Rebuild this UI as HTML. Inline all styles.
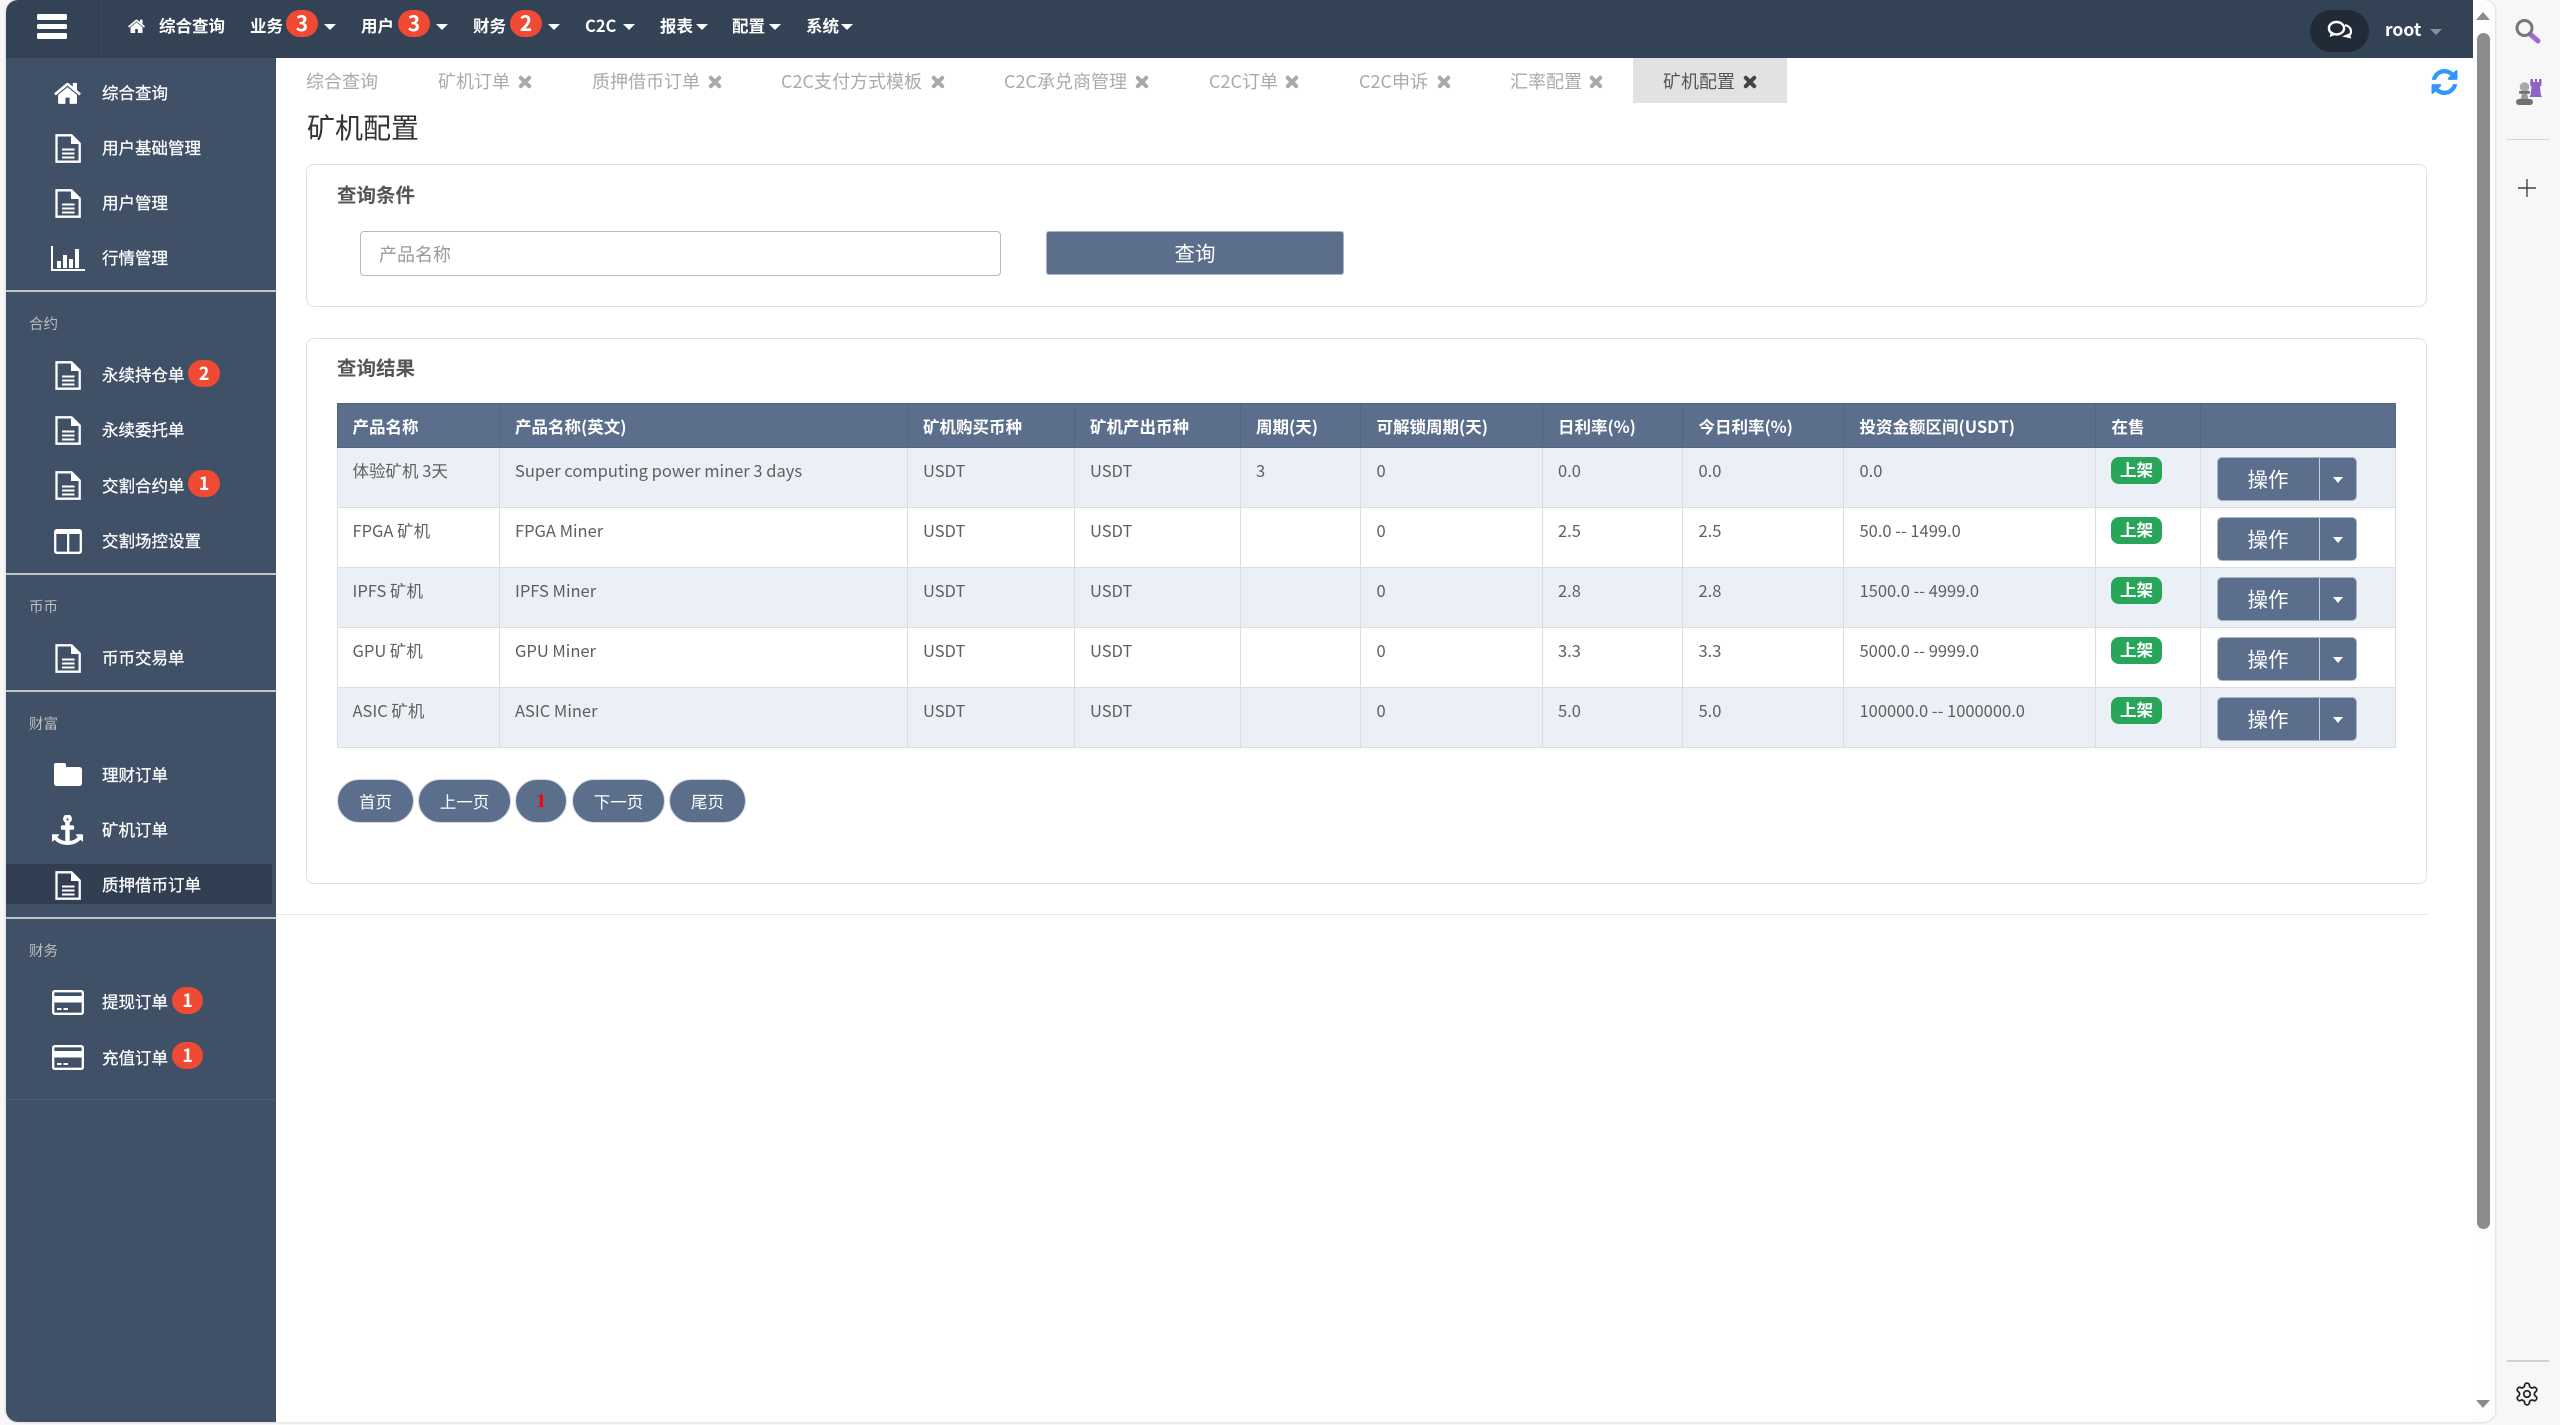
<!DOCTYPE html>
<html lang="zh-CN">
<head>
<meta charset="utf-8">
<title>矿机配置</title>
<style>
html,body{margin:0;padding:0;width:2560px;height:1425px;overflow:hidden;background:#f7f7f7;}
*{box-sizing:border-box;}
body{font-family:"Liberation Sans","Noto Sans CJK SC",sans-serif;}
.cj,.t,table,.btn,.pg{font-family:"Noto Sans CJK SC","Liberation Sans",sans-serif;}
.abs,.t,.car,.bdg,svg.i{position:absolute;}
.t{white-space:nowrap;line-height:26px;font-size:16.5px;}
#shadow{position:absolute;left:6px;top:0;width:2489px;height:1422px;border-radius:12px;box-shadow:0 0 0 1.5px #e6e6e6;}
#app{position:absolute;left:0;top:0;width:2495px;height:1422px;clip-path:inset(0 0 0 6px round 12px);background:#fff;overflow:hidden;}
.car{width:0;height:0;border-left:6px solid transparent;border-right:6px solid transparent;border-top:6.5px solid #fff;}
.nv{color:#fff;font-weight:700;}
.bdg{background:#f04934;color:#fff;font-weight:700;font-size:18px;text-align:center;border-radius:14px;line-height:27px;font-family:"Noto Sans CJK SC",sans-serif;}
.bdg.big{font-size:21px;}
.sd{color:#fff;font-weight:400;left:102px;-webkit-text-stroke:.25px #fff;}
.lb{color:#bdbdbd;font-size:14.5px;left:29px;}
.hr{position:absolute;left:6px;width:270px;height:2px;background:#c4c4c4;}
.tab{color:#aaa;font-size:18px;}
svg.x{color:#aaa;top:75px;}
.card{position:absolute;border:1px solid #e0e0e0;border-radius:8px;background:#fff;}
.h{color:#555;font-weight:700;font-size:19.5px;}
table{position:absolute;left:337px;top:403px;width:2058px;border-collapse:collapse;table-layout:fixed;font-size:16.5px;color:#5f5f5f;}
th{height:44px;background:#5b6f8c;color:#fff;text-align:left;padding:0 0 0 15.500px;font-weight:700;border:1px solid #526480;line-height:24px;}
td{height:60px;vertical-align:top;padding:10px 0 0 15.500px;border:1px solid #ddd;line-height:24px;position:relative;}
th:first-child,td:first-child{padding-left:14.500px;}
tr.o td{background:#ebeff6;}
.on{position:absolute;left:15px;top:9px;width:51px;height:27px;background:#27a65a;border-radius:8px;color:#fff;font-weight:700;font-size:16.5px;line-height:25px;text-align:center;}
.bg{position:absolute;left:15.500px;top:9px;width:140px;height:44px;background:#5b6f8c;border:1px solid #a8b2c2;border-radius:5px;}
.bg b{position:absolute;left:0;top:0;width:102px;height:42px;color:#fff;font-weight:400;font-size:20.5px;line-height:40px;text-align:center;border-right:1px solid #c8d0da;}
.bg i{position:absolute;left:115px;top:19px;width:0;height:0;border-left:5.500px solid transparent;border-right:5.500px solid transparent;border-top:6px solid #fff;}
.pg{position:absolute;top:779px;height:44px;background:#5b6f8c;border:1px solid #d5d9e0;border-radius:22px;color:#fff;font-size:16.5px;line-height:42px;text-align:center;}
</style>
</head>
<body>
<svg width="0" height="0" style="position:absolute">
<defs>
<symbol id="doc" viewBox="0 0 26 29">
<path d="M1.500 1.300H16.500L24.700 9.500V27.700H1.500Z" fill="none" stroke="#fff" stroke-width="2.300"/>
<path d="M16 1 25 10H16Z" fill="#fff"/>
<path d="M7 15.500H19.500M7 19.500H19.500M7 23.500H19.500" stroke="#fff" stroke-width="2"/>
</symbol>
<symbol id="cardi" viewBox="0 0 32 25">
<rect x="1.200" y="1.200" width="29.600" height="22.600" rx="1.500" fill="none" stroke="#fff" stroke-width="2.300"/>
<rect x="1" y="6" width="30" height="6.500" fill="#fff"/>
<path d="M5 19H9.500M11.500 19H16" stroke="#fff" stroke-width="2"/>
</symbol>
<symbol id="xx" viewBox="0 0 14 14">
<path d="M2.800 2.800 11.200 11.200M11.200 2.800 2.800 11.200" fill="none" stroke="currentColor" stroke-width="4" stroke-linecap="round"/>
</symbol>
</defs>
</svg>
<div id="shadow"></div>
<div id="app">

<!-- top bar -->
<div class="abs" style="left:0;top:0;width:2473px;height:58px;background:#344256"></div>
<div class="abs" style="left:98px;top:0;width:1px;height:58px;background:#2f3c4f"></div>
<div class="abs" style="left:37px;top:14px;width:30px;height:5.500px;background:#fff;border-radius:1.500px"></div>
<div class="abs" style="left:37px;top:24px;width:30px;height:5px;background:#fff;border-radius:1.500px"></div>
<div class="abs" style="left:37px;top:33px;width:30px;height:5.500px;background:#fff;border-radius:1.500px"></div>

<svg class="i" style="left:128px;top:19px" width="17" height="14" viewBox="90 200 1610 1340"><path fill="#fff" d="M1472 992v480q0 26-19 45t-45 19h-384v-384h-256v384h-384q-26 0-45-19t-19-45v-480q0-1 .5-3t.5-3l575-474 575 474q1 2 1 6zm223-69l-62 74q-8 9-21 11h-3q-13 0-21-7l-692-577-692 577q-12 8-24 7-13-2-21-11l-62-74q-8-10-7-23.500t11-21.500l719-599q32-26 76-26t76 26l244 204v-195q0-14 9-23t23-9h192q14 0 23 9t9 23v408l219 182q10 8 11 21.500t-7 23.500z"/></svg>
<span class="t nv" style="left:159px;top:12px">综合查询</span>
<span class="t nv" style="left:250px;top:12px">业务</span>
<span class="bdg big" style="left:286px;top:10px;width:32px;height:27px">3</span>
<i class="car" style="left:324px;top:24px"></i>
<span class="t nv" style="left:361px;top:12px">用户</span>
<span class="bdg big" style="left:398px;top:10px;width:32px;height:27px">3</span>
<i class="car" style="left:436px;top:24px"></i>
<span class="t nv" style="left:473px;top:12px">财务</span>
<span class="bdg big" style="left:510px;top:10px;width:32px;height:27px">2</span>
<i class="car" style="left:548px;top:24px"></i>
<span class="t nv" style="left:585px;top:12px">C2C</span>
<i class="car" style="left:623px;top:24px"></i>
<span class="t nv" style="left:660px;top:12px">报表</span>
<i class="car" style="left:696px;top:24px"></i>
<span class="t nv" style="left:732px;top:12px">配置</span>
<i class="car" style="left:769px;top:24px"></i>
<span class="t nv" style="left:806px;top:12px">系统</span>
<i class="car" style="left:841px;top:24px"></i>

<div class="abs" style="left:2310px;top:10px;width:59px;height:42px;border-radius:21px;background:#212a37"></div>
<svg class="i" style="left:2327px;top:19px" width="27" height="21" viewBox="0 0 27 21">
<path d="M18 6c3.500 1 6 3 6 6.500 0 2-1 3.500-2.500 4.500" fill="none" stroke="#fff" stroke-width="2.200"/>
<path d="M15 17.500l9.500 2-2.500-5z" fill="#fff"/>
<ellipse cx="9.500" cy="9.200" rx="7.600" ry="6.200" fill="#212a37" stroke="#fff" stroke-width="2.400"/>
<path d="M4 13l-1.500 5 7-2.500z" fill="#fff"/>
</svg>
<span class="t" style="left:2385px;top:17px;color:#fff;font-weight:700;font-size:17.5px">root</span>
<i class="car" style="left:2430px;top:29px;border-top-color:#8b909a;border-top-width:6px"></i>

<!-- sidebar -->
<div class="abs" style="left:6px;top:58px;width:270px;height:1364px;background:#3f5067"></div>

<svg class="i" style="left:54px;top:82px" width="27" height="22" viewBox="90 200 1610 1340"><path fill="#fff" d="M1472 992v480q0 26-19 45t-45 19h-384v-384h-256v384h-384q-26 0-45-19t-19-45v-480q0-1 .5-3t.5-3l575-474 575 474q1 2 1 6zm223-69l-62 74q-8 9-21 11h-3q-13 0-21-7l-692-577-692 577q-12 8-24 7-13-2-21-11l-62-74q-8-10-7-23.500t11-21.500l719-599q32-26 76-26t76 26l244 204v-195q0-14 9-23t23-9h192q14 0 23 9t9 23v408l219 182q10 8 11 21.500t-7 23.500z"/></svg>
<span class="t sd" style="top:79px">综合查询</span>

<svg class="i" style="left:55px;top:134px" width="26" height="29"><use href="#doc"/></svg>
<span class="t sd" style="top:134px">用户基础管理</span>

<svg class="i" style="left:55px;top:189px" width="26" height="29"><use href="#doc"/></svg>
<span class="t sd" style="top:189px">用户管理</span>

<svg class="i" style="left:51px;top:246px" width="34" height="25" viewBox="0 0 34 25">
<path d="M1 0V24H34" fill="none" stroke="#fff" stroke-width="2"/>
<rect x="6" y="15" width="4" height="7" fill="#fff"/><rect x="12" y="9" width="4" height="13" fill="#fff"/><rect x="18" y="13" width="4" height="9" fill="#fff"/><rect x="24" y="3" width="4" height="19" fill="#fff"/>
</svg>
<span class="t sd" style="top:244px">行情管理</span>

<div class="hr" style="top:290px"></div>
<span class="t lb" style="top:311px">合约</span>

<svg class="i" style="left:55px;top:361px" width="26" height="29"><use href="#doc"/></svg>
<span class="t sd" style="top:361px">永续持仓单</span>
<span class="bdg" style="left:188px;top:360px;width:32px;height:27px">2</span>

<svg class="i" style="left:55px;top:416px" width="26" height="29"><use href="#doc"/></svg>
<span class="t sd" style="top:416px">永续委托单</span>

<svg class="i" style="left:55px;top:471px" width="26" height="29"><use href="#doc"/></svg>
<span class="t sd" style="top:472px">交割合约单</span>
<span class="bdg" style="left:188px;top:470px;width:32px;height:27px">1</span>

<svg class="i" style="left:54px;top:529px" width="28" height="25" viewBox="0 0 28 25">
<rect x="1.200" y="1.200" width="25.600" height="22.600" rx="1.500" fill="none" stroke="#fff" stroke-width="2.300"/>
<rect x="1" y="1" width="26" height="4" fill="#fff"/>
<rect x="13" y="3" width="2.300" height="20" fill="#fff"/>
</svg>
<span class="t sd" style="top:527px">交割场控设置</span>

<div class="hr" style="top:573px"></div>
<span class="t lb" style="top:594px">币币</span>

<svg class="i" style="left:55px;top:644px" width="26" height="29"><use href="#doc"/></svg>
<span class="t sd" style="top:644px">币币交易单</span>

<div class="hr" style="top:690px"></div>
<span class="t lb" style="top:711px">财富</span>

<svg class="i" style="left:54px;top:762px" width="28" height="24" viewBox="0 0 28 24"><path fill="#fff" d="M0 3Q0 1 2 1H10Q12 1 12 3V5H25Q28 5 28 8V21Q28 24 25 24H3Q0 24 0 21Z"/></svg>
<span class="t sd" style="top:761px">理财订单</span>

<svg class="i" style="left:52px;top:815px" width="31" height="31" viewBox="0 0 1792 1792"><path fill="#fff" fill-rule="evenodd" d="M960 256q0-26-19-45t-45-19-45 19-19 45 19 45 45 19 45-19 19-45zm832 888v352q0 22-20 30-8 2-12 2-12 0-23-9l-93-93q-119 143-318.500 226.500t-429.500 83.500-429.500-83.500-318.500-226.500l-93 93q-9 9-23 9-4 0-12-2-20-8-20-30v-352q0-14 9-23t23-9h352q22 0 30 20 8 19-7 35l-100 100q67 91 189.500 153.500t271.500 82.500v-647h-192q-26 0-45-19t-19-45v-128q0-26 19-45t45-19h192v-163q-58-34-93-92.500t-35-128.500q0-106 75-181t181-75 181 75 75 181q0 70-35 128.500t-93 92.500v163h192q26 0 45 19t19 45v128q0 26-19 45t-45 19h-192v647q149-20 271.500-82.500t189.500-153.500l-100-100q-15-16-7-35 8-20 30-20h352q14 0 23 9t9 23z"/></svg>
<span class="t sd" style="top:816px">矿机订单</span>

<div class="abs" style="left:6px;top:864px;width:266px;height:40px;background:#323f52"></div>
<svg class="i" style="left:55px;top:871px" width="26" height="29"><use href="#doc"/></svg>
<span class="t sd" style="top:871px">质押借币订单</span>

<div class="hr" style="top:917px"></div>
<span class="t lb" style="top:938px">财务</span>

<svg class="i" style="left:52px;top:990px" width="32" height="25"><use href="#cardi"/></svg>
<span class="t sd" style="top:988px">提现订单</span>
<span class="bdg" style="left:172px;top:987px;width:31px;height:27px">1</span>

<svg class="i" style="left:52px;top:1045px" width="32" height="25"><use href="#cardi"/></svg>
<span class="t sd" style="top:1044px">充值订单</span>
<span class="bdg" style="left:172px;top:1042px;width:31px;height:27px">1</span>

<div class="abs" style="left:6px;top:1099px;width:270px;height:1px;background:#4e5f77"></div>

<!-- tabs -->
<span class="t tab" style="left:306px;top:68px">综合查询</span>
<span class="t tab" style="left:438px;top:68px">矿机订单</span><svg class="i x" style="left:518px" width="14" height="14"><use href="#xx"/></svg>
<span class="t tab" style="left:592px;top:68px">质押借币订单</span><svg class="i x" style="left:708px" width="14" height="14"><use href="#xx"/></svg>
<span class="t tab" style="left:781px;top:68px">C2C支付方式模板</span><svg class="i x" style="left:931px" width="14" height="14"><use href="#xx"/></svg>
<span class="t tab" style="left:1004px;top:68px">C2C承兑商管理</span><svg class="i x" style="left:1135px" width="14" height="14"><use href="#xx"/></svg>
<span class="t tab" style="left:1209px;top:68px">C2C订单</span><svg class="i x" style="left:1285px" width="14" height="14"><use href="#xx"/></svg>
<span class="t tab" style="left:1359px;top:68px">C2C申诉</span><svg class="i x" style="left:1437px" width="14" height="14"><use href="#xx"/></svg>
<span class="t tab" style="left:1510px;top:68px">汇率配置</span><svg class="i x" style="left:1589px" width="14" height="14"><use href="#xx"/></svg>
<div class="abs" style="left:1633px;top:58px;width:154px;height:45px;background:#e2e2e2"></div>
<span class="t tab" style="left:1663px;top:68px;color:#555">矿机配置</span><svg class="i x" style="left:1743px;color:#444" width="14" height="14"><use href="#xx"/></svg>

<svg class="i" style="left:2431px;top:69px" width="27" height="26" viewBox="128 128 1536 1536"><path fill="#3296fa" d="M1639 1056q0 5-1 7-64 268-268 434.500t-478 166.500q-146 0-282.500-55t-243.500-157l-129 129q-19 19-45 19t-45-19-19-45v-448q0-26 19-45t45-19h448q26 0 45 19t19 45-19 45l-137 137q71 66 161 102t187 36q134 0 250-65t186-179q11-17 53-117 8-23 30-23h192q13 0 22.500 9.500t9.500 22.500zm25-800v448q0 26-19 45t-45 19h-448q-26 0-45-19t-19-45 19-45l138-138q-148-137-349-137-134 0-250 65t-186 179q-11 17-53 117-8 23-30 23h-199q-13 0-22.500-9.500t-9.500-22.500v-7q65-268 270-434.500t480-166.500q146 0 284 55.500t245 156.500l130-129q19-19 45-19t45 19 19 45z"/></svg>

<span class="t" style="left:307px;top:107px;font-size:28px;line-height:40px;color:#333">矿机配置</span>

<!-- query card -->
<div class="card" style="left:306px;top:164px;width:2121px;height:143px"></div>
<span class="t h" style="left:337px;top:181px">查询条件</span>
<div class="abs" style="left:360px;top:231px;width:641px;height:45px;border:1px solid #bbb;border-radius:4px;background:#fff"></div>
<span class="t" style="left:379px;top:241px;font-size:18px;color:#999">产品名称</span>
<div class="abs btn" style="left:1046px;top:231px;width:298px;height:44px;background:#5b6f8c;border:1px solid #a8b2c2;border-radius:3px;color:#fff;font-size:20.5px;line-height:41px;text-align:center">查询</div>

<!-- result card -->
<div class="card" style="left:306px;top:338px;width:2121px;height:546px"></div>
<span class="t h" style="left:337px;top:354px">查询结果</span>

<table>
<colgroup><col style="width:161.500px"><col style="width:408px"><col style="width:167px"><col style="width:166px"><col style="width:120.500px"><col style="width:181.500px"><col style="width:140.500px"><col style="width:161px"><col style="width:252px"><col style="width:105px"><col style="width:195px"></colgroup>
<tr><th>产品名称</th><th>产品名称(英文)</th><th>矿机购买币种</th><th>矿机产出币种</th><th>周期(天)</th><th>可解锁周期(天)</th><th>日利率(%)</th><th>今日利率(%)</th><th>投资金额区间(USDT)</th><th>在售</th><th></th></tr>
<tr class="o"><td>体验矿机 3天</td><td>Super computing power miner 3 days</td><td>USDT</td><td>USDT</td><td>3</td><td>0</td><td>0.0</td><td>0.0</td><td>0.0</td><td><span class="on">上架</span></td><td><span class="bg"><b>操作</b><i></i></span></td></tr>
<tr><td>FPGA 矿机</td><td>FPGA Miner</td><td>USDT</td><td>USDT</td><td></td><td>0</td><td>2.5</td><td>2.5</td><td>50.0 -- 1499.0</td><td><span class="on">上架</span></td><td><span class="bg"><b>操作</b><i></i></span></td></tr>
<tr class="o"><td>IPFS 矿机</td><td>IPFS Miner</td><td>USDT</td><td>USDT</td><td></td><td>0</td><td>2.8</td><td>2.8</td><td>1500.0 -- 4999.0</td><td><span class="on">上架</span></td><td><span class="bg"><b>操作</b><i></i></span></td></tr>
<tr><td>GPU 矿机</td><td>GPU Miner</td><td>USDT</td><td>USDT</td><td></td><td>0</td><td>3.3</td><td>3.3</td><td>5000.0 -- 9999.0</td><td><span class="on">上架</span></td><td><span class="bg"><b>操作</b><i></i></span></td></tr>
<tr class="o"><td>ASIC 矿机</td><td>ASIC Miner</td><td>USDT</td><td>USDT</td><td></td><td>0</td><td>5.0</td><td>5.0</td><td>100000.0 -- 1000000.0</td><td><span class="on">上架</span></td><td><span class="bg"><b>操作</b><i></i></span></td></tr>
</table>

<div class="pg" style="left:337px;width:77px">首页</div>
<div class="pg" style="left:418px;width:93px">上一页</div>
<div class="pg" style="left:515px;width:52px;color:#f00;font-family:'Liberation Serif',serif;font-size:20px;font-weight:700">1</div>
<div class="pg" style="left:572px;width:93px">下一页</div>
<div class="pg" style="left:669px;width:77px">尾页</div>

<div class="abs" style="left:276px;top:914px;width:2151px;height:1px;background:#e6e6e6"></div>

<!-- scrollbar -->
<div class="abs" style="left:2473px;top:0;width:22px;height:1422px;background:#fdfdfd"></div>
<div class="abs" style="left:2477px;top:33px;width:13px;height:1196px;background:#8c8c8c;border-radius:7px"></div>
<i class="car" style="left:2476px;top:12px;border-left-width:7.500px;border-right-width:7.500px;border-top:0;border-bottom:8px solid #8c8c8c"></i>
<i class="car" style="left:2476px;top:1400px;border-left-width:7.500px;border-right-width:7.500px;border-top:8px solid #8c8c8c"></i>
</div>

<!-- browser side panel -->
<svg class="i" style="left:2514px;top:18px" width="28" height="26" viewBox="0 0 28 26">
<path d="M16 16 24 23" stroke="#9b6bd3" stroke-width="5" stroke-linecap="round"/>
<circle cx="10.500" cy="10" r="7.500" fill="none" stroke="#777" stroke-width="3"/>
</svg>
<svg class="i" style="left:2514px;top:77px" width="32" height="29" viewBox="0 0 32 29">
<path d="M16.500 2h2.500v3h2v-3h2v3h2v-3h2.500v6l-1.500 1.500.8 8 1.200 2.500H15.500l1.200-2.500.8-8-1.500-1.500z" fill="#8e62c8"/>
<circle cx="10.500" cy="10" r="4.800" fill="#a9a9a9"/>
<rect x="5" y="14" width="11" height="2.800" rx="1" fill="#6f6f6f"/>
<path d="M8 16.500h5l1.500 6h-8z" fill="#999"/>
<rect x="2" y="22" width="17" height="6" rx="3" fill="#6f6f6f"/>
</svg>
<div class="abs" style="left:2507px;top:139px;width:42px;height:1px;background:#d4d4d4"></div>
<svg class="i" style="left:2518px;top:179px" width="18" height="18" viewBox="0 0 18 18"><path d="M9 0V18M0 9H18" stroke="#444" stroke-width="1.400"/></svg>
<div class="abs" style="left:2507px;top:1360px;width:42px;height:1.500px;background:#d0d0d0"></div>
<svg class="i" style="left:2514px;top:1381px" width="26" height="26" viewBox="0 0 24 24" fill="none" stroke="#222" stroke-width="1.600"><path d="M12.220 2h-.44a2 2 0 0 0-2 2v.18a2 2 0 0 1-1 1.730l-.43.25a2 2 0 0 1-2 0l-.15-.08a2 2 0 0 0-2.730.73l-.22.38a2 2 0 0 0 .73 2.730l.15.1a2 2 0 0 1 1 1.720v.51a2 2 0 0 1-1 1.740l-.15.09a2 2 0 0 0-.73 2.730l.22.38a2 2 0 0 0 2.730.73l.15-.08a2 2 0 0 1 2 0l.43.25a2 2 0 0 1 1 1.730V20a2 2 0 0 0 2 2h.44a2 2 0 0 0 2-2v-.18a2 2 0 0 1 1-1.730l.43-.25a2 2 0 0 1 2 0l.15.08a2 2 0 0 0 2.730-.73l.22-.39a2 2 0 0 0-.73-2.730l-.15-.08a2 2 0 0 1-1-1.740v-.5a2 2 0 0 1 1-1.740l.15-.09a2 2 0 0 0 .73-2.730l-.22-.38a2 2 0 0 0-2.730-.73l-.15.08a2 2 0 0 1-2 0l-.43-.25a2 2 0 0 1-1-1.730V4a2 2 0 0 0-2-2z"/><circle cx="12" cy="12" r="3"/></svg>
</body>
</html>
